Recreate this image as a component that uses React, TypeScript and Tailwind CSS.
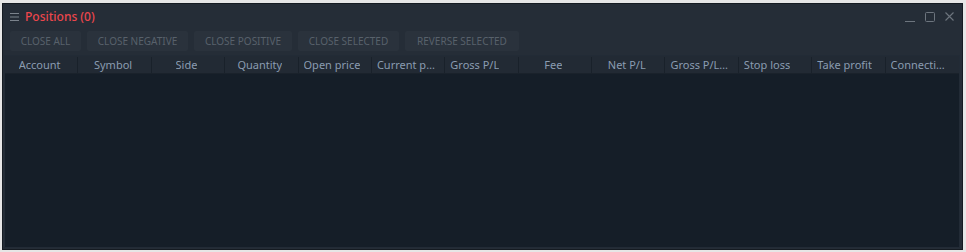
const buttons = [
  { label: "CLOSE ALL", w: "w-[71px]" },
  { label: "CLOSE NEGATIVE", w: "w-[101px]" },
  { label: "CLOSE POSITIVE", w: "w-[98px]" },
  { label: "CLOSE SELECTED", w: "w-[101px]" },
  { label: "REVERSE SELECTED", w: "w-[114px]" },
];

const columns = [
  { label: "Account", align: "justify-center" },
  { label: "Symbol", align: "justify-center" },
  { label: "Side", align: "justify-center" },
  { label: "Quantity", align: "justify-center" },
  { label: "Open price", align: "justify-start" },
  { label: "Current price", align: "justify-start" },
  { label: "Gross P/L", align: "justify-start" },
  { label: "Fee", align: "justify-center" },
  { label: "Net P/L", align: "justify-center" },
  { label: "Gross P/L, USD", align: "justify-start" },
  { label: "Stop loss", align: "justify-start" },
  { label: "Take profit", align: "justify-start" },
  { label: "Connection", align: "justify-start" },
];

const App = () => {
  return (
    <div className="w-[966px] h-[252px] bg-[#e6e6e6] pt-[3px] pl-[2px] pr-[3px] pb-[2px] font-['Noto_Sans',sans-serif]">
      <div className="h-full flex flex-col bg-[#252d37] border border-[#151b22]">
        {/* title bar */}
        <div className="h-[25px] flex items-center pl-[7px] pr-[8px]">
          <svg width="9" height="8" viewBox="0 0 9 8" className="mr-[6px]">
            <rect x="0" y="0" width="9" height="1" fill="#7b838c" />
            <rect x="0" y="3.5" width="9" height="1" fill="#7b838c" />
            <rect x="0" y="7" width="9" height="1" fill="#7b838c" />
          </svg>
          <span className="text-[12px] font-medium text-[#ec464c] leading-[16px]">Positions (0)</span>
          <div className="ml-auto flex items-center gap-[10px]">
            <svg width="10" height="10" viewBox="0 0 10 10">
              <rect x="0" y="9" width="10" height="1" fill="#6d757e" />
            </svg>
            <svg width="10" height="10" viewBox="0 0 10 10">
              <rect x="0.5" y="0.5" width="9" height="9" rx="1" fill="none" stroke="#6d757e" />
            </svg>
            <svg width="9" height="9" viewBox="0 0 9 9">
              <path d="M0.5 0.5 L8.5 8.5 M8.5 0.5 L0.5 8.5" stroke="#6d757e" strokeWidth="1.1" />
            </svg>
          </div>
        </div>

        {/* action buttons */}
        <div className="flex gap-[6px] pl-[7px] mt-[2px]">
          {buttons.map((b) => (
            <button
              key={b.label}
              className={`${b.w} h-[20px] rounded-[2px] bg-[#2a323c] text-[10px] text-[#58616b] flex items-center justify-center`}
            >
              {b.label}
            </button>
          ))}
        </div>

        {/* table */}
        <div className="flex-1 flex flex-col mt-[4px] ml-[1px] mr-[2px] mb-[1px] border border-[#222b36] bg-[#151e28]">
          <div className="h-[18px] pt-[1px] grid grid-cols-[repeat(13,minmax(0,1fr))] bg-[#222a34] border-b border-[#1a222b]">
            {columns.map((c, i) => (
              <div
                key={c.label}
                className={`flex items-center ${c.align} pl-[5px] pr-[8px] min-w-0 ${i < columns.length - 1 ? "border-r border-[#19212a]" : "pr-[14px]"}`}
              >
                <span className="truncate text-[11px] leading-[16px] text-[#8a9cb1]">{c.label}</span>
              </div>
            ))}
          </div>
          <div className="flex-1" />
        </div>
      </div>
    </div>
  );
};

export default App;
